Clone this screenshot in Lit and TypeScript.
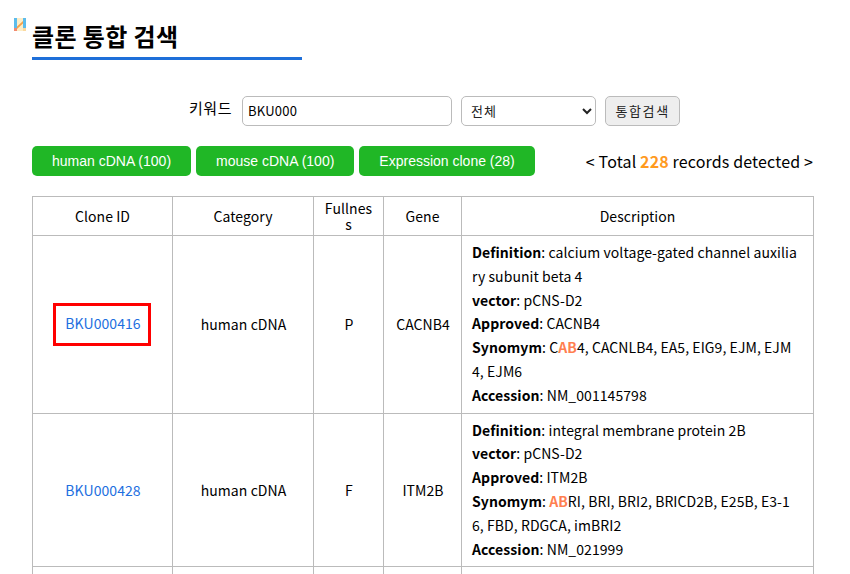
import { LitElement, html, css } from "lit";
import { customElement } from "lit/decorators.js";

const rows = [
  {
    id: "BKU000416", cat: "human cDNA", full: "P", gene: "CACNB4", boxed: true,
    def: "calcium voltage-gated channel auxiliary subunit beta 4",
    appr: "CACNB4",
    syn: html`C<b class="hit">AB</b>4, CACNLB4, EA5, EIG9, EJM, EJM4, EJM6`,
    acc: "NM_001145798",
  },
  {
    id: "BKU000428", cat: "human cDNA", full: "F", gene: "ITM2B", boxed: false,
    def: "integral membrane protein 2B",
    appr: "ITM2B",
    syn: html`<b class="hit">AB</b>RI, BRI, BRI2, BRICD2B, E25B, E3-16, FBD, RDGCA, imBRI2`,
    acc: "NM_021999",
  },
];

@customElement("app-root")
export class AppRoot extends LitElement {
  static styles = css`
    :host {
      display: block;
      width: 850px;
      height: 574px;
      overflow: hidden;
      background: #fff;
      color: #000;
      font-family: "Noto Sans CJK KR", "Noto Sans", sans-serif;
      font-size: 14px;
    }
    .page { padding: 0 37px 0 32px; position: relative; }
    .logo { position: absolute; left: 14px; top: 18px; width: 12px; height: 13px; }
    h1 {
      margin: 0;
      width: 270px;
      height: 60px;
      box-sizing: border-box;
      padding-top: 17px;
      border-bottom: 3px solid #1e6fd9;
      font-size: 24px;
      line-height: 38px;
      font-weight: 700;
      letter-spacing: 0.4px;
    }
    .search {
      display: flex;
      justify-content: center;
      align-items: center;
      gap: 9px;
      margin-top: 36px;
      padding-left: 24px;
      height: 30px;
    }
    .search label { font-size: 15px; margin-right: 1px; position: relative; bottom: 4px; letter-spacing: 0.6px; }
    .search input, .search select {
      box-sizing: border-box;
      height: 30px;
      border: 1px solid #bbb;
      border-radius: 5px;
      background: #fff;
      font-family: inherit;
      font-size: 13px;
      color: #000;
      padding: 0 5px 2px;
      margin: 0;
      outline: none;
    }
    .search input { width: 210px; letter-spacing: 0.2px; }
    .search select { width: 135px; padding-left: 5px; color: #222; letter-spacing: 1px; }
    .search button {
      box-sizing: border-box;
      width: 75px;
      height: 30px;
      border: 1px solid #bbb;
      border-radius: 5px;
      background: #eee;
      font-family: inherit;
      font-size: 13px;
      color: #222;
      padding: 0 0 2px;
      letter-spacing: 1.6px;
    }
    .bar {
      display: flex;
      align-items: center;
      margin-top: 20px;
      height: 30px;
    }
    .tabs { display: flex; gap: 5px; }
    .tab {
      height: 30px;
      line-height: 30px;
      padding: 0 20px;
      border-radius: 5px;
      background: #20b726;
      color: #fff;
      font-family: "Liberation Sans", Arial, sans-serif;
      font-size: 14px;
      white-space: nowrap;
    }
    .total { margin-left: auto; font-size: 16px; white-space: nowrap; letter-spacing: 0.15px; }
    .total b { color: #ff9a1f; }
    table {
      margin-top: 20px;
      width: 781px;
      border-collapse: collapse;
      table-layout: fixed;
      line-height: 1.7;
      letter-spacing: 0.07px;
    }
    th, td {
      border: 1px solid #bbb;
      padding: 2px 0 0 1px;
      text-align: center;
      vertical-align: middle;
      word-break: break-all;
      font-weight: 400;
    }
    th { height: 38px; line-height: 16px; padding: 0 10px; }
    td.desc { text-align: left; padding: 5px 12px 5px 10px; }
    td.empty { height: 40px; }
    a { color: #1e6fe0; text-decoration: none; }
    .boxed {
      display: inline-block;
      padding: 6px 7px 7px 9px;
      border: 3px solid #f00;
      position: relative;
      top: -1px;
      left: -1px;
    }
    .desc b { font-weight: 700; }
    .desc b.hit { color: #ff7f50; }
  `;

  render() {
    return html`
      <div class="page">
        <svg class="logo" viewBox="0 0 12 13" aria-hidden="true">
          <rect x="3" y="0" width="6" height="13" fill="#fdeec8" />
          <rect x="0" y="0" width="3" height="13" fill="#5cbcec" />
          <rect x="9" y="0" width="3" height="13" fill="#5cbcec" />
          <rect x="0" y="10" width="3" height="3" fill="#f28a70" />
          <rect x="9" y="10" width="3" height="3" fill="#fbd9a0" />
          <path d="M3 8.5 L9 3 V5.5 L3 11 Z" fill="#f7a24a" />
        </svg>
        <h1>클론 통합 검색</h1>
        <div class="search">
          <label>키워드</label>
          <input .value=${"BKU000"} />
          <select><option>전체</option></select>
          <button>통합검색</button>
        </div>
        <div class="bar">
          <div class="tabs">
            <div class="tab">human cDNA (100)</div>
            <div class="tab">mouse cDNA (100)</div>
            <div class="tab">Expression clone (28)</div>
          </div>
          <div class="total">&lt; Total <b>228</b> records detected &gt;</div>
        </div>
        <table>
          <colgroup>
            <col style="width:140px" /><col style="width:141px" /><col style="width:70px" />
            <col style="width:78px" /><col style="width:352px" />
          </colgroup>
          <thead>
            <tr><th>Clone ID</th><th>Category</th><th>Fullness</th><th>Gene</th><th>Description</th></tr>
          </thead>
          <tbody>
            ${rows.map(
              (r) => html`<tr>
                <td>${r.boxed
                  ? html`<span class="boxed"><a href="#">${r.id}</a></span>`
                  : html`<a href="#">${r.id}</a>`}</td>
                <td>${r.cat}</td>
                <td>${r.full}</td>
                <td>${r.gene}</td>
                <td class="desc">
                  <b>Definition</b>: ${r.def}<br />
                  <b>vector</b>: pCNS-D2<br />
                  <b>Approved</b>: ${r.appr}<br />
                  <b>Synomym</b>: ${r.syn}<br />
                  <b>Accession</b>: ${r.acc}
                </td>
              </tr>`
            )}
            <tr><td class="empty"></td><td></td><td></td><td></td><td></td></tr>
          </tbody>
        </table>
      </div>
    `;
  }
}
